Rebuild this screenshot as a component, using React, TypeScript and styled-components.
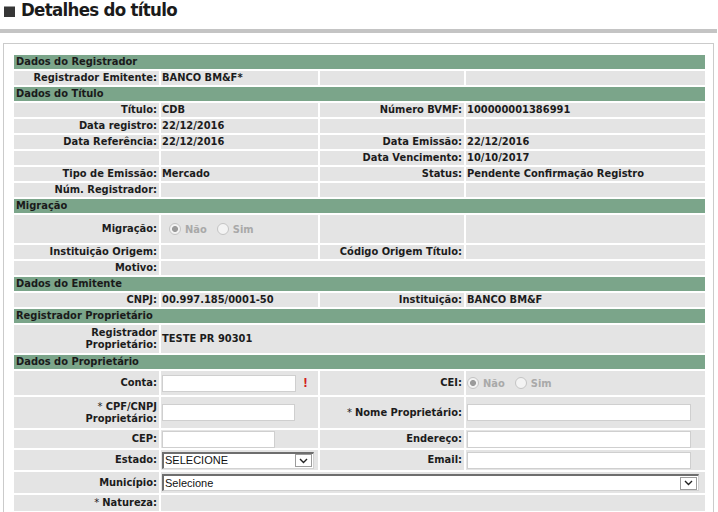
import React from "react"
import styled, { createGlobalStyle } from "styled-components"

const GlobalStyle = createGlobalStyle`
  html, body {
    margin: 0;
    padding: 0;
    background: #fff;
  }
  body {
    font-family: "DejaVu Sans Condensed", "DejaVu Sans", Verdana, sans-serif;
    color: #1c1c1c;
  }
`

const Page = styled.div`
  width: 718px;
`

const Title = styled.h1`
  margin: 0;
  height: 29px;
  display: flex;
  align-items: flex-start;
  gap: 6px;
  padding-left: 4px;
  font-size: 18.5px;
  letter-spacing: -0.7px;
  line-height: 20px;
  font-weight: bold;
  color: #1b1b1b;
`

const TitleMark = styled.span`
  width: 11px;
  height: 10px;
  margin-top: 6px;
  background: #363636;
  border-top: 1px solid #9a9a9a;
  flex-shrink: 0;
`

const Rule = styled.div`
  height: 4px;
  width: 717px;
  background: #c4c4c4;
`

const Panel = styled.div`
  margin: 10px 0 0 3px;
  width: 711px;
  box-sizing: border-box;
  border: 1px solid #cbcbcb;
  padding: 11px 8px 20px 10px;
`

const Table = styled.div`
  display: flex;
  flex-direction: column;
  gap: 2px;
  font-size: 11px;
  font-weight: bold;
  line-height: 14px;
`

const Section = styled.div`
  height: 14px;
  padding-left: 2px;
  background: #7ba58a;
  color: #1a1a1a;
`

const Row = styled.div<{ $h?: number }>`
  display: grid;
  grid-template-columns: 145px 157px 144px 239px;
  column-gap: 2px;
  min-height: ${(p) => p.$h ?? 14}px;
`

const Cell = styled.div<{ $span?: number; $indent?: number }>`
  grid-column: span ${(p) => p.$span ?? 1};
  display: flex;
  align-items: center;
  min-width: 0;
  padding: 0 1px 0 ${(p) => p.$indent ?? 1}px;
  background: #e4e4e4;
  white-space: nowrap;
`

const Label = styled(Cell)`
  justify-content: flex-end;
  text-align: right;
  padding: 0 2px 0 2px;
  line-height: 12px;
  white-space: normal;
`

const Req = styled.span`
  font-weight: normal;
`

const TextInput = styled.input<{ $w: number }>`
  width: ${(p) => p.$w}px;
  height: 17px;
  box-sizing: border-box;
  margin: 0;
  padding: 0 2px;
  border: 1px solid #cfcfcf;
  background: #fff;
  font: 11px "Liberation Sans", Arial, sans-serif;
  outline: none;
`

const SelectBox = styled.div<{ $w: number }>`
  width: ${(p) => p.$w}px;
  height: 17px;
  box-sizing: border-box;
  display: flex;
  align-items: center;
  justify-content: space-between;
  background: #fff;
  border: 1px solid #d2d2d2;
  border-top: 2px solid #6e6e6e;
  border-left: 2px solid #6e6e6e;
  padding-left: 1px;
  font: 11px/13px "Liberation Sans", Arial, sans-serif;
  color: #111;
`

const DropButton = styled.span`
  width: 17px;
  height: 13px;
  box-sizing: border-box;
  margin-right: 1px;
  display: flex;
  align-items: center;
  justify-content: center;
  border: 1px solid #9c9c9c;
  background: #fff;
`

const Warn = styled.span`
  margin-left: 7px;
  color: #d21d1d;
  font-size: 12px;
`

const RadioDot = styled.span<{ $on?: boolean }>`
  width: 12px;
  height: 12px;
  box-sizing: border-box;
  border-radius: 50%;
  border: 1px solid #c4c4c4;
  background: ${(p) =>
    p.$on ? "radial-gradient(circle, #9b9b9b 0 2.6px, #f3f3f3 3.4px)" : "#f3f3f3"};
  flex-shrink: 0;
`

const RadioText = styled.span`
  margin: 1px 10px 0 4px;
  color: #a9a9a9;
`

function RadioPair() {
  return (
    <>
      <RadioDot $on />
      <RadioText>Não</RadioText>
      <RadioDot />
      <RadioText>Sim</RadioText>
    </>
  )
}

function Select({ width, text }: { width: number; text: string }) {
  return (
    <SelectBox $w={width}>
      <span>{text}</span>
      <DropButton>
        <svg width="9" height="6" viewBox="0 0 9 6">
          <polyline points="1,1 4.5,4.5 8,1" fill="none" stroke="#222" strokeWidth="1.4" />
        </svg>
      </DropButton>
    </SelectBox>
  )
}

export default function App() {
  return (
    <Page>
      <GlobalStyle />
      <Title>
        <TitleMark />
        Detalhes do título
      </Title>
      <Rule />
      <Panel>
        <Table>
          <Section>Dados do Registrador</Section>
          <Row>
            <Label>Registrador Emitente:</Label>
            <Cell>BANCO BM&amp;F*</Cell>
            <Cell />
            <Cell />
          </Row>

          <Section>Dados do Título</Section>
          <Row>
            <Label>Título:</Label>
            <Cell>CDB</Cell>
            <Label>Número BVMF:</Label>
            <Cell>100000001386991</Cell>
          </Row>
          <Row>
            <Label>Data registro:</Label>
            <Cell>22/12/2016</Cell>
            <Cell />
            <Cell />
          </Row>
          <Row>
            <Label>Data Referência:</Label>
            <Cell>22/12/2016</Cell>
            <Label>Data Emissão:</Label>
            <Cell>22/12/2016</Cell>
          </Row>
          <Row>
            <Cell />
            <Cell />
            <Label>Data Vencimento:</Label>
            <Cell>10/10/2017</Cell>
          </Row>
          <Row>
            <Label>Tipo de Emissão:</Label>
            <Cell>Mercado</Cell>
            <Label>Status:</Label>
            <Cell>Pendente Confirmação Registro</Cell>
          </Row>
          <Row>
            <Label>Núm. Registrador:</Label>
            <Cell />
            <Cell />
            <Cell />
          </Row>

          <Section>Migração</Section>
          <Row $h={28}>
            <Label>Migração:</Label>
            <Cell $indent={8}>
              <RadioPair />
            </Cell>
            <Cell />
            <Cell />
          </Row>
          <Row>
            <Label>Instituição Origem:</Label>
            <Cell />
            <Label>Código Origem Título:</Label>
            <Cell />
          </Row>
          <Row>
            <Label>Motivo:</Label>
            <Cell $span={3} />
          </Row>

          <Section>Dados do Emitente</Section>
          <Row>
            <Label>CNPJ:</Label>
            <Cell>00.997.185/0001-50</Cell>
            <Label>Instituição:</Label>
            <Cell>BANCO BM&amp;F</Cell>
          </Row>

          <Section>Registrador Proprietário</Section>
          <Row $h={28}>
            <Label>
              Registrador
              <br />
              Proprietário:
            </Label>
            <Cell $span={3}>TESTE PR 90301</Cell>
          </Row>

          <Section>Dados do Proprietário</Section>
          <Row $h={24}>
            <Label>Conta:</Label>
            <Cell>
              <TextInput $w={134} />
              <Warn>!</Warn>
            </Cell>
            <Label>CEI:</Label>
            <Cell>
              <RadioPair />
            </Cell>
          </Row>
          <Row $h={31}>
            <Label>
              <span>
                <Req>* </Req>CPF/CNPJ
                <br />
                Proprietário:
              </span>
            </Label>
            <Cell>
              <TextInput $w={133} />
            </Cell>
            <Label>
              <span>
                <Req>* </Req>Nome Proprietário:
              </span>
            </Label>
            <Cell>
              <TextInput $w={224} />
            </Cell>
          </Row>
          <Row $h={18}>
            <Label>CEP:</Label>
            <Cell>
              <TextInput $w={113} />
            </Cell>
            <Label>Endereço:</Label>
            <Cell>
              <TextInput $w={224} />
            </Cell>
          </Row>
          <Row $h={20}>
            <Label>Estado:</Label>
            <Cell>
              <Select width={152} text="SELECIONE" />
            </Cell>
            <Label>Email:</Label>
            <Cell>
              <TextInput $w={224} />
            </Cell>
          </Row>
          <Row $h={21}>
            <Label>Município:</Label>
            <Cell $span={3}>
              <Select width={537} text="Selecione" />
            </Cell>
          </Row>
          <Row $h={16}>
            <Label>
              <span>
                <Req>* </Req>Natureza:
              </span>
            </Label>
            <Cell $span={3} />
          </Row>
        </Table>
      </Panel>
    </Page>
  )
}
